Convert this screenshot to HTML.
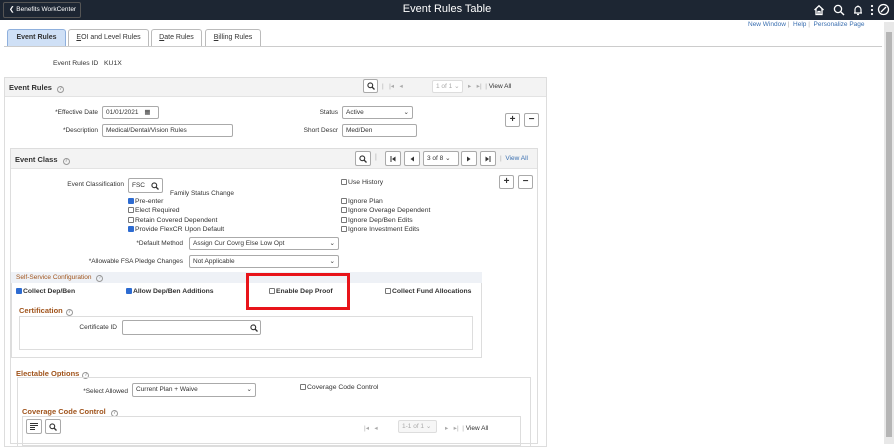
<!DOCTYPE html>
<html><head><meta charset="utf-8"><style>
*{box-sizing:border-box;margin:0;padding:0}
body{width:894px;height:444px;overflow:hidden;background:#fff;font-family:"Liberation Sans",Arial,sans-serif;font-size:7px;color:#333;position:relative}
.a{position:absolute;white-space:nowrap}
.top{left:0;top:0;width:894px;height:20px;background:#1d2633}
.back{left:3px;top:2px;width:78px;height:16px;border:1px solid #555;border-radius:2px;color:#fff;font-size:6.5px;line-height:14px;padding-left:5px}
.title{left:0;width:894px;text-align:center;top:3px;color:#fff;font-size:11px}
.tab{top:29px;height:17px;border:1px solid #bbb;border-bottom:none;border-radius:3px 3px 0 0;background:#fff;font-size:7px;line-height:16px;text-align:center;color:#333}
.lnk{color:#3a6fb0;font-size:6.5px}
.box{border:1px solid #ddd;background:#fff}
.hdr{background:#f3f3f3;border-bottom:1px solid #e3e3e3}
.h{font-weight:bold;font-size:7.5px;color:#333}
.lbl{font-size:6.5px;color:#333;text-align:right}
.in{border:1px solid #aaa;border-radius:2px;height:13px;font-size:6.5px;line-height:11px;padding-left:3px;background:#fff}
.cb{display:inline-block;width:6px;height:6px;border:1px solid #777;border-radius:1px;vertical-align:-1px;margin-right:1px;background:#fff}
.ck{background:#2d6bd1;border-color:#2d6bd1}
.t{font-size:6.8px;color:#333}
.btn{border:1px solid #aaa;border-radius:2px;background:#fff;width:15px;height:14px;text-align:center;font-size:10px;line-height:12px;font-weight:bold;color:#333}
.nb{border:1px solid #aaa;border-radius:2px;width:16px;height:15px;display:flex;align-items:center;justify-content:center;background:#fff}
.brn{color:#a0541c;font-weight:bold;font-size:7.5px}
.q{display:inline-block;width:7px;height:7px;border:1px solid #999;border-radius:50%;font-size:5px;line-height:5px;text-align:center;color:#999;vertical-align:0;margin-left:3px}
.g{color:#aaa}
svg{display:block}
</style></head><body>
<div class="a top"></div>
<div class="a back">&#10094; Benefits WorkCenter</div>
<div class="a title">Event Rules Table</div>
<svg class="a" style="left:813px;top:4px" width="12" height="12" viewBox="0 0 12 12"><path d="M1.5 6 L6 1.8 L10.5 6 M3 5 V10.5 H9 V5 M5 10.5 V7.5 H7 V10.5" fill="none" stroke="#fff" stroke-width="1.3"/></svg>
<svg class="a" style="left:833px;top:4px" width="12" height="12" viewBox="0 0 12 12"><circle cx="5" cy="5" r="3.6" fill="none" stroke="#fff" stroke-width="1.3"/><path d="M7.6 7.6 L11 11" stroke="#fff" stroke-width="1.4"/></svg>
<svg class="a" style="left:852px;top:4px" width="12" height="12" viewBox="0 0 12 12"><path d="M3 9 V5.5 A3 3 0 0 1 9 5.5 V9 Z M2 9 H10 M5 10.5 H7 M6 1.5 V2.5" fill="none" stroke="#fff" stroke-width="1.2"/></svg>
<svg class="a" style="left:869px;top:4px" width="6" height="12" viewBox="0 0 6 12"><circle cx="3" cy="2" r="1.1" fill="#fff"/><circle cx="3" cy="6" r="1.1" fill="#fff"/><circle cx="3" cy="10" r="1.1" fill="#fff"/></svg>
<svg class="a" style="left:877px;top:3px" width="13" height="13" viewBox="0 0 13 13"><circle cx="6.5" cy="6.5" r="5" fill="none" stroke="#fff" stroke-width="1.3"/><path d="M4 9 L9 4" stroke="#fff" stroke-width="1.3"/></svg>
<div class="a lnk" style="left:748px;top:21px">New Window <span class="g">|</span> &nbsp;Help <span class="g">|</span> &nbsp;Personalize Page</div>
<div class="a" style="left:884px;top:22px;width:10px;height:422px;background:#e8e8e8"></div>
<div class="a" style="left:886px;top:32px;width:6px;height:405px;background:#b5b5b5"></div>

<div class="a tab" style="left:7px;width:59px;background:#cfe0f6;border-color:#8fb0dd;font-weight:bold">Event Rules</div>
<div class="a tab" style="left:68px;width:81px"><u>E</u>OI and Level Rules</div>
<div class="a tab" style="left:151px;width:51px"><u>D</u>ate Rules</div>
<div class="a tab" style="left:205px;width:56px"><u>B</u>illing Rules</div>
<div class="a" style="left:4px;top:46px;width:878px;height:1px;background:#ccc"></div>
<div class="a t" style="left:53px;top:60px">Event Rules ID &nbsp;&nbsp;KU1X</div>

<div class="a box" style="left:4px;top:77px;width:543px;height:370px"></div>
<div class="a hdr" style="left:5px;top:78px;width:541px;height:19px"></div>
<div class="a h" style="left:9px;top:83px">Event Rules <span class="q">?</span></div>
<div class="a nb" style="left:363px;top:79px;width:15px;height:14px"><svg width="8" height="8" viewBox="0 0 8 8"><circle cx="3.3" cy="3.3" r="2.4" fill="none" stroke="#333" stroke-width="1.1"/><path d="M5 5 L7.5 7.5" stroke="#333" stroke-width="1.3"/></svg></div>
<div class="a g" style="left:382px;top:82px;font-size:6.5px">| &nbsp;&nbsp;|◂ &nbsp;&nbsp;◂</div>
<div class="a in" style="left:432px;top:80px;width:31px;color:#aaa;border-color:#ddd">1 of 1 ⌄</div>
<div class="a g" style="left:468px;top:82px;font-size:6.5px">▸ &nbsp;&nbsp;▸| &nbsp;| <span style="color:#333">View All</span></div>
<div class="a lbl" style="left:30px;top:109px;width:68px">*Effective Date</div>
<div class="a in" style="left:102px;top:106px;width:57px">01/01/2021 <span style="margin-left:4px">▦</span></div>
<div class="a lbl" style="left:30px;top:127px;width:68px">*Description</div>
<div class="a in" style="left:102px;top:124px;width:131px">Medical/Dental/Vision Rules</div>
<div class="a lbl" style="left:280px;top:109px;width:58px">Status</div>
<div class="a in" style="left:342px;top:106px;width:71px">Active<span style="float:right;margin-right:3px">⌄</span></div>
<div class="a lbl" style="left:280px;top:127px;width:58px">Short Descr</div>
<div class="a in" style="left:342px;top:124px;width:75px">Med/Den</div>
<div class="a btn" style="left:505px;top:113px">+</div>
<div class="a btn" style="left:524px;top:113px">−</div>

<div class="a box" style="left:10px;top:148px;width:528px;height:296px"></div>
<div class="a hdr" style="left:11px;top:149px;width:526px;height:20px"></div>
<div class="a h" style="left:15px;top:155px">Event Class <span class="q">?</span></div>
<div class="a nb" style="left:355px;top:151px"><svg width="8" height="8" viewBox="0 0 8 8"><circle cx="3.3" cy="3.3" r="2.4" fill="none" stroke="#333" stroke-width="1.1"/><path d="M5 5 L7.5 7.5" stroke="#333" stroke-width="1.3"/></svg></div>
<div class="a g" style="left:375px;top:154px">|</div>
<div class="a nb" style="left:385px;top:151px"><svg width="6" height="6" viewBox="0 0 6 6"><path d="M1 0V6" stroke="#333"/><path d="M5.5 0.5V5.5L2 3Z" fill="#333"/></svg></div>
<div class="a nb" style="left:404px;top:151px"><svg width="6" height="6" viewBox="0 0 6 6"><path d="M5 0.5V5.5L1.5 3Z" fill="#333"/></svg></div>
<div class="a in" style="left:423px;top:151px;width:36px;height:15px;line-height:13px">3 of 8 ⌄</div>
<div class="a nb" style="left:461px;top:151px"><svg width="6" height="6" viewBox="0 0 6 6"><path d="M1 0.5V5.5L4.5 3Z" fill="#333"/></svg></div>
<div class="a nb" style="left:480px;top:151px"><svg width="6" height="6" viewBox="0 0 6 6"><path d="M0.5 0.5V5.5L4 3Z" fill="#333"/><path d="M5 0V6" stroke="#333"/></svg></div>
<div class="a lnk" style="left:500px;top:155px"><span class="g">|</span> &nbsp;View All</div>

<div class="a lbl" style="left:40px;top:181px;width:84px">Event Classification</div>
<div class="a in" style="left:128px;top:178px;width:35px;height:15px;line-height:13px">FSC</div>
<svg class="a" style="left:151px;top:182px" width="8" height="8" viewBox="0 0 8 8"><circle cx="3.3" cy="3.3" r="2.4" fill="none" stroke="#333" stroke-width="1.1"/><path d="M5 5 L7.5 7.5" stroke="#333" stroke-width="1.3"/></svg>
<div class="a t" style="left:170px;top:190px;font-size:6.5px">Family Status Change</div>
<div class="a t" style="left:128px;top:197px;line-height:9.3px"><span class="cb ck"></span>Pre-enter<br><span class="cb"></span>Elect Required<br><span class="cb"></span>Retain Covered Dependent<br><span class="cb ck"></span>Provide FlexCR Upon Default</div>
<div class="a t" style="left:341px;top:179px"><span class="cb"></span>Use History</div>
<div class="a t" style="left:341px;top:197px;line-height:9.3px"><span class="cb"></span>Ignore Plan<br><span class="cb"></span>Ignore Overage Dependent<br><span class="cb"></span>Ignore Dep/Ben Edits<br><span class="cb"></span>Ignore Investment Edits</div>
<div class="a btn" style="left:499px;top:175px">+</div>
<div class="a btn" style="left:518px;top:175px">−</div>
<div class="a lbl" style="left:90px;top:240px;width:93px">*Default Method</div>
<div class="a in" style="left:189px;top:237px;width:150px">Assign Cur Covrg Else Low Opt<span style="float:right;margin-right:3px">⌄</span></div>
<div class="a lbl" style="left:40px;top:258px;width:143px">*Allowable FSA Pledge Changes</div>
<div class="a in" style="left:189px;top:255px;width:150px">Not Applicable<span style="float:right;margin-right:3px">⌄</span></div>

<div class="a" style="left:11px;top:272px;width:471px;height:86px;border:1px solid #ddd;border-top:none"></div>
<div class="a" style="left:11px;top:272px;width:471px;height:11px;background:#eef1f6"></div>
<div class="a" style="left:16px;top:274px;color:#a0541c;font-size:6.5px">Self-Service Configuration <span class="q">?</span></div>
<div class="a t" style="left:16px;top:288px;font-weight:bold"><span class="cb ck"></span>Collect Dep/Ben</div>
<div class="a t" style="left:126px;top:288px;font-weight:bold"><span class="cb ck"></span>Allow Dep/Ben Additions</div>
<div class="a t" style="left:269px;top:288px;font-weight:bold"><span class="cb"></span>Enable Dep Proof</div>
<div class="a t" style="left:385px;top:288px;font-weight:bold"><span class="cb"></span>Collect Fund Allocations</div>
<div class="a" style="left:246px;top:273px;width:104px;height:37px;border:3px solid #e8141a"></div>
<div class="a brn" style="left:19px;top:306px">Certification<span class="q">?</span></div>
<div class="a" style="left:19px;top:316px;width:454px;height:34px;border:1px solid #ddd"></div>
<div class="a lbl" style="left:50px;top:324px;width:67px">Certificate ID</div>
<div class="a in" style="left:122px;top:320px;width:139px;height:15px"></div>
<svg class="a" style="left:250px;top:324px" width="8" height="8" viewBox="0 0 8 8"><circle cx="3.3" cy="3.3" r="2.4" fill="none" stroke="#333" stroke-width="1.1"/><path d="M5 5 L7.5 7.5" stroke="#333" stroke-width="1.3"/></svg>

<div class="a brn" style="left:16px;top:369px">Electable Options<span class="q">?</span></div>
<div class="a" style="left:17px;top:377px;width:514px;height:70px;border:1px solid #ddd"></div>
<div class="a lbl" style="left:60px;top:388px;width:68px">*Select Allowed</div>
<div class="a in" style="left:132px;top:383px;width:124px;height:14px">Current Plan + Waive<span style="float:right;margin-right:3px">⌄</span></div>
<div class="a t" style="left:300px;top:384px"><span class="cb"></span>Coverage Code Control</div>
<div class="a brn" style="left:22px;top:407px">Coverage Code Control <span class="q">?</span></div>
<div class="a" style="left:22px;top:416px;width:499px;height:30px;border:1px solid #ddd"></div>
<div class="a nb" style="left:26px;top:419px"><svg width="8" height="7" viewBox="0 0 8 7"><path d="M0 0.5H8M0 2.5H8M0 4.5H5M0 6.5H5" stroke="#333" stroke-width="1"/></svg></div>
<div class="a nb" style="left:45px;top:419px"><svg width="8" height="8" viewBox="0 0 8 8"><circle cx="3.3" cy="3.3" r="2.4" fill="none" stroke="#333" stroke-width="1.1"/><path d="M5 5 L7.5 7.5" stroke="#333" stroke-width="1.3"/></svg></div>
<div class="a g" style="left:364px;top:424px;font-size:6.5px">|◂ &nbsp;&nbsp;◂</div>
<div class="a in" style="left:398px;top:420px;width:39px;color:#aaa;border-color:#ddd;background:#f6f6f6">1-1 of 1 ⌄</div>
<div class="a g" style="left:445px;top:424px;font-size:6.5px">▸ &nbsp;&nbsp;▸| &nbsp;| <span style="color:#333">View All</span></div>
</body></html>
